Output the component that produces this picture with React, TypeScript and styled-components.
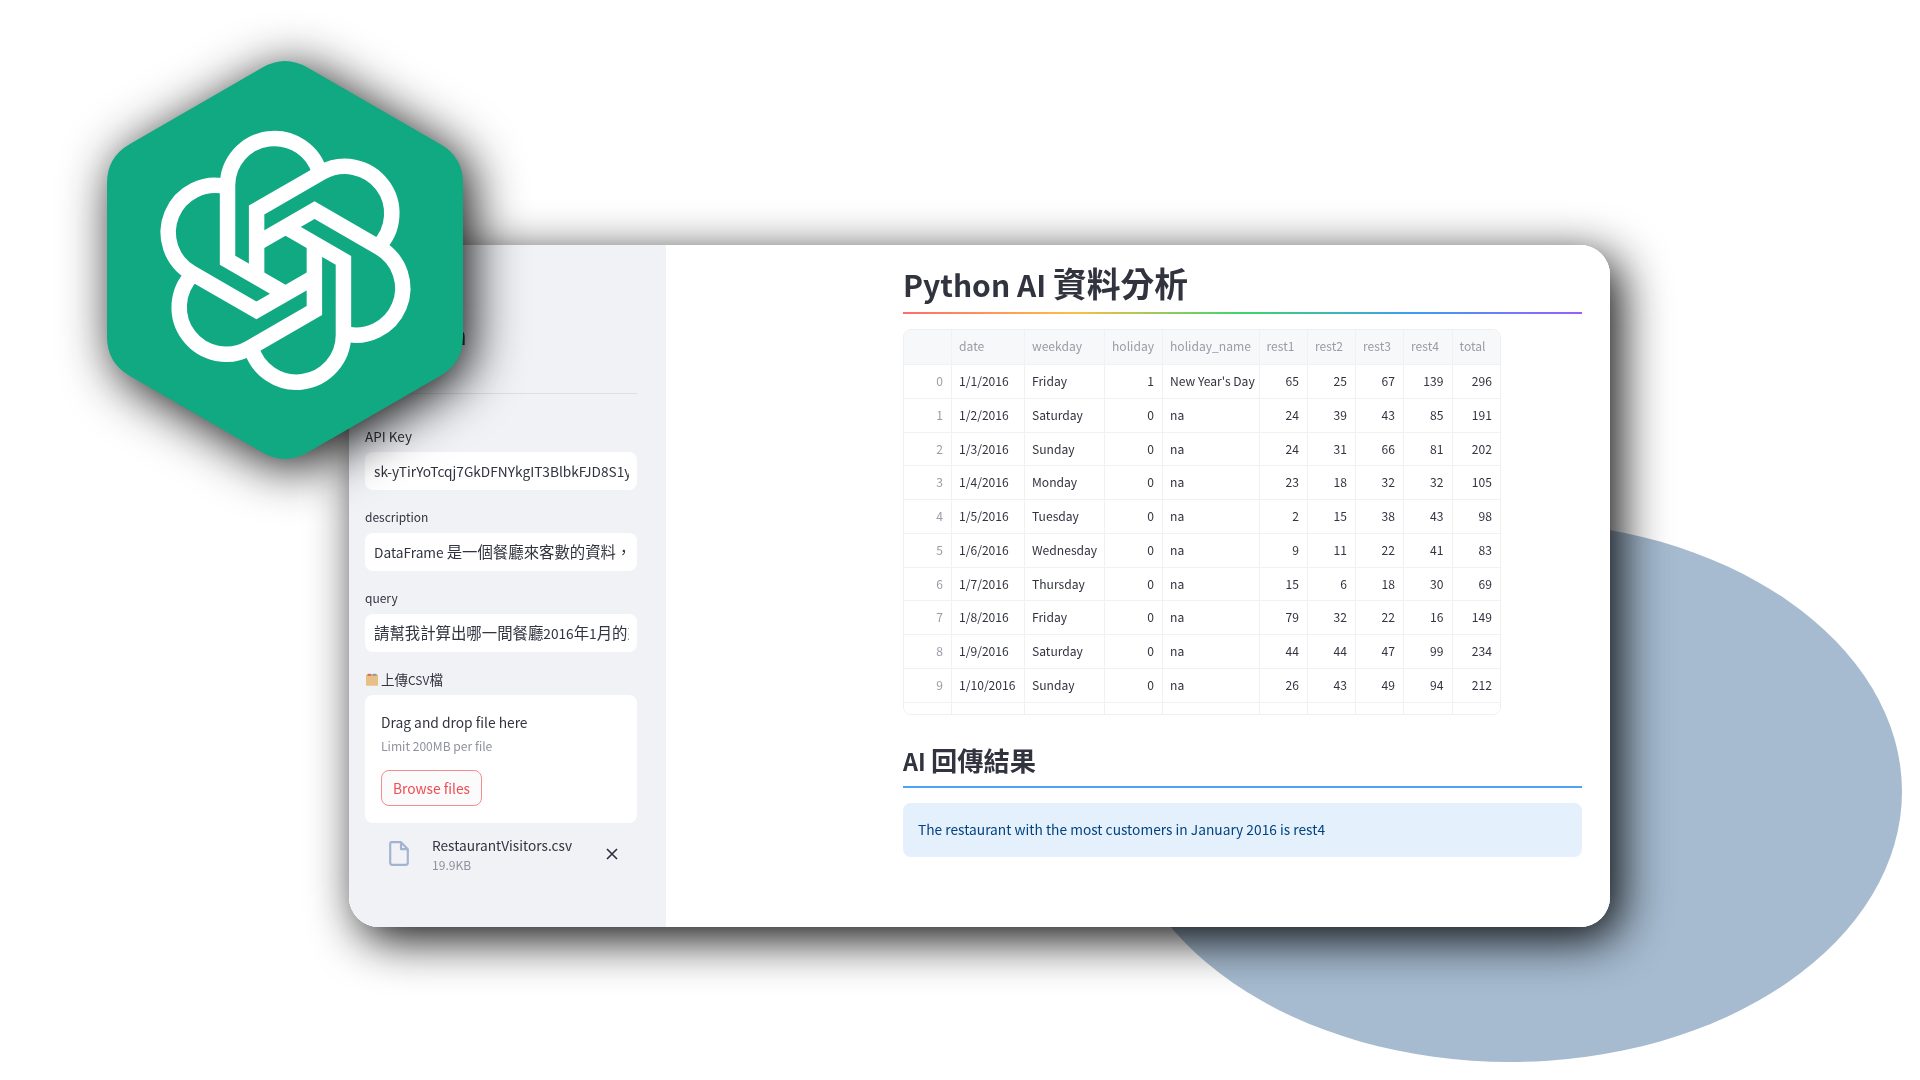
import React from "react";
import styled, { createGlobalStyle } from "styled-components";

const FONT = `"Noto Sans CJK TC", "Noto Sans", sans-serif`;

const Global = createGlobalStyle`
  html, body { margin: 0; padding: 0; background: #fff; }
  body { font-family: ${FONT}; color: #31333f; }
`;

const Stage = styled.div`
  position: relative;
  width: 1920px;
  height: 1080px;
  padding: 245px 310px 153px 349px;
  box-sizing: border-box;
  overflow: hidden;
  background: #fff;
`;

const Blob = styled.div`
  position: absolute;
  left: 1118px;
  top: 521px;
  width: 784px;
  height: 541px;
  border-radius: 50%;
  background: #a6bbd0;
`;

const Logo = styled.svg`
  position: absolute;
  left: 90px;
  top: 40px;
  width: 400px;
  height: 440px;
  overflow: visible;
  filter: drop-shadow(8px 8px 26px rgba(0, 0, 0, 0.95));
`;

const WindowShadow = styled.div`
  position: relative;
  height: 100%;
  border-radius: 30px;
  box-shadow: 10px 12px 48px rgba(0, 0, 0, 0.95);
`;

const Window = styled.div`
  display: flex;
  height: 100%;
  border-radius: 30px;
  overflow: hidden;
  background: #fff;
  filter: blur(0.35px);
`;

const Lat = styled.span`
  font-size: 0.89em;
`;

const Sidebar = styled.aside`
  width: 317px;
  flex: none;
  box-sizing: border-box;
  padding: 0 29px 0 16px;
  background: #f0f2f6;
`;

const SideHead = styled.div`
  height: 149px;
  padding-top: 70px;
  border-bottom: 1px solid #dcdee4;
  box-sizing: border-box;
  margin-bottom: 32px;
`;

const SideTitle = styled.div`
  width: 101.5px;
  height: 40px;
  font-size: 24px;
  line-height: 40px;
  font-weight: 700;
  text-align: right;
  white-space: nowrap;
  overflow: hidden;
`;

const Field = styled.div`
  display: flex;
  flex-direction: column;
  gap: 6px;
  margin-bottom: 17px;
`;

const FieldLabel = styled.label`
  display: flex;
  align-items: center;
  gap: 2px;
  height: 20px;
  font-size: 13.5px;
  line-height: 18px;
  color: #31333f;
`;

const InputBox = styled.div`
  height: 38px;
  box-sizing: border-box;
  padding: 0 8px 0 9px;
  border-radius: 8px;
  background: #fff;
  font-size: 15.4px;
  line-height: 36px;
  color: #31333f;
`;

const InputText = styled.div`
  white-space: nowrap;
  overflow: hidden;
`;

const Dropzone = styled.div`
  height: 128px;
  box-sizing: border-box;
  padding: 16px 16px 0;
  border-radius: 8px;
  background: #fff;
`;

const DropTitle = styled.div`
  font-size: 13.8px;
  line-height: 22px;
`;

const DropHint = styled.div`
  margin-top: 4px;
  font-size: 12.1px;
  line-height: 18px;
  color: #8f929e;
`;

const Browse = styled.button`
  display: block;
  margin-top: 15px;
  width: 101px;
  height: 36px;
  padding: 0;
  border: 1px solid #f08e92;
  border-radius: 8px;
  background: #fbfbfb;
  font-family: ${FONT};
  font-size: 13.8px;
  color: #ef4c54;
`;

const FileRow = styled.div`
  display: flex;
  align-items: flex-start;
  padding: 5px 0 0 24px;
`;

const FileIcon = styled.svg`
  width: 20px;
  height: 25px;
  margin-top: 7px;
  flex: none;
`;

const FileInfo = styled.div`
  width: 173px;
  margin-left: 23px;
`;

const FileName = styled.div`
  font-size: 13.7px;
  line-height: 22px;
`;

const FileSize = styled.div`
  font-size: 12.1px;
  line-height: 18px;
  color: #8f929e;
`;

const CloseIcon = styled.svg`
  width: 14px;
  height: 14px;
  margin-top: 13px;
  flex: none;
`;

const Main = styled.main`
  flex: 1;
  box-sizing: border-box;
  padding: 10px 28px 0 237px;
  background: #fff;
`;

const Title = styled.h1`
  margin: 0;
  height: 57px;
  font-size: 33.75px;
  line-height: 55px;
  font-weight: 700;
  color: #31333f;
`;

const Rule = styled.div<{ $rainbow?: boolean }>`
  height: 2px;
  background: ${(p) =>
    p.$rainbow
      ? "linear-gradient(to right, #ff6c6c, #ffbd45, #3dd56d, #3d9df3, #9a5dff)"
      : "#4fa3f3"};
`;

const TableWrap = styled.div`
  margin-top: 15px;
  width: 598px;
  height: 386px;
  box-sizing: border-box;
  overflow: hidden;
  border: 1px solid #eeeff1;
  border-radius: 8px;
`;

const COLS = "48px 73px 80px 58px 96.5px 48.5px 48px 48px 48.5px 48.5px";

const Row = styled.div<{ $head?: boolean }>`
  display: grid;
  grid-template-columns: ${COLS};
  height: ${(p) => (p.$head ? "35px" : "33.75px")};
  box-sizing: border-box;
  border-bottom: 1.5px solid #f0f1f3;
  background: ${(p) => (p.$head ? "#f7f8f9" : "#fff")};
  line-height: ${(p) => (p.$head ? "32px" : "31px")};
`;

const Cell = styled.div<{ $right?: boolean; $muted?: boolean }>`
  box-sizing: border-box;
  padding: 0 ${(p) => (p.$right ? "8px" : "2px")} 0 7px;
  border-right: 1.5px solid #f0f1f3;
  font-size: 12.1px;
  white-space: nowrap;
  overflow: hidden;
  text-align: ${(p) => (p.$right ? "right" : "left")};
  color: ${(p) => (p.$muted ? "#9a9ca6" : "#31333f")};
`;

const Heading = styled.h2`
  margin: 22px 0 0;
  height: 49px;
  font-size: 26.25px;
  line-height: 47px;
  font-weight: 700;
  color: #31333f;
`;

const Info = styled.div`
  margin-top: 15px;
  height: 54px;
  box-sizing: border-box;
  padding: 0 15px;
  border-radius: 8px;
  background: #e4f0fb;
  font-size: 13.75px;
  line-height: 52px;
  color: #004280;
`;

const headers = ["", "date", "weekday", "holiday", "holiday_name", "rest1", "rest2", "rest3", "rest4", "total"];

const rows: [string, string, number, string, number, number, number, number, number][] = [
  ["1/1/2016", "Friday", 1, "New Year's Day", 65, 25, 67, 139, 296],
  ["1/2/2016", "Saturday", 0, "na", 24, 39, 43, 85, 191],
  ["1/3/2016", "Sunday", 0, "na", 24, 31, 66, 81, 202],
  ["1/4/2016", "Monday", 0, "na", 23, 18, 32, 32, 105],
  ["1/5/2016", "Tuesday", 0, "na", 2, 15, 38, 43, 98],
  ["1/6/2016", "Wednesday", 0, "na", 9, 11, 22, 41, 83],
  ["1/7/2016", "Thursday", 0, "na", 15, 6, 18, 30, 69],
  ["1/8/2016", "Friday", 0, "na", 79, 32, 22, 16, 149],
  ["1/9/2016", "Saturday", 0, "na", 44, 44, 47, 99, 234],
  ["1/10/2016", "Sunday", 0, "na", 26, 43, 49, 94, 212],
  ["1/11/2016", "Monday", 0, "na", 21, 28, 30, 54, 133],
];

const HEX =
  "M172.5 27.5Q195 14.5 217.5 27.5L350.5 104.25Q373 117.25 373 143.25L373 296.75Q373 322.75 350.5 335.75L217.5 412.5Q195 425.5 172.5 412.5L39.5 335.75Q17 322.75 17 296.75L17 143.25Q17 117.25 39.5 104.25Z";

// One ribbon of the knot: inner leg, corner, diagonal, big lobe. The mark is six of these turned by 60 degrees.
const RIBBON = "M-29.33 17L-29.33 -51L36.5 -89A47.67 47.67 0 0 1 94 -14";

export default function App() {
  return (
    <Stage>
      <Global />
      <Blob />
      <WindowShadow>
        <Window>
          <Sidebar>
            <SideHead>
              <SideTitle>Open</SideTitle>
            </SideHead>
            <Field>
              <FieldLabel>API Key</FieldLabel>
              <InputBox>
                <InputText>
                  <Lat>sk-yTirYoTcqj7GkDFNYkgIT3BlbkFJD8S1yLmnopQrStUv</Lat>
                </InputText>
              </InputBox>
            </Field>
            <Field>
              <FieldLabel>
                <Lat>description</Lat>
              </FieldLabel>
              <InputBox>
                <InputText>
                  <Lat>DataFrame </Lat>是一個餐廳來客數的資料，包含日期
                </InputText>
              </InputBox>
            </Field>
            <Field>
              <FieldLabel>
                <Lat>query</Lat>
              </FieldLabel>
              <InputBox>
                <InputText>
                  請幫我計算出哪一間餐廳<Lat>2016</Lat>年<Lat>1</Lat>月的來客數最多
                </InputText>
              </InputBox>
            </Field>
            <Field>
              <FieldLabel>
                <svg width="14" height="13" viewBox="0 0 14 13">
                  <path d="M1 2.5h12v9.5a.7.7 0 0 1-.7.7H1.7a.7.7 0 0 1-.7-.7z" fill="#e6c084" />
                  <path d="M2 1h10l1 2H1z" fill="#d9ad70" />
                  <rect x="3" y="0.8" width="3" height="2" fill="#d8696a" />
                  <rect x="8" y="0.8" width="3" height="2" fill="#7f9fcf" />
                </svg>
                <span>
                  上傳<Lat>CSV</Lat>檔
                </span>
              </FieldLabel>
              <Dropzone>
                <DropTitle>Drag and drop file here</DropTitle>
                <DropHint>Limit 200MB per file</DropHint>
                <Browse>Browse files</Browse>
              </Dropzone>
              <FileRow>
                <FileIcon viewBox="0 0 20 25">
                  <path
                    d="M2.5 1.2h9.5l6.8 7v13.6a2 2 0 0 1-2 2H3.2a2 2 0 0 1-2-2V2.5a1.3 1.3 0 0 1 1.3-1.3zM12 1.2v7h6.8"
                    fill="none"
                    stroke="#a3b4d2"
                    strokeWidth="2.2"
                    strokeLinejoin="round"
                  />
                </FileIcon>
                <FileInfo>
                  <FileName>RestaurantVisitors.csv</FileName>
                  <FileSize>19.9KB</FileSize>
                </FileInfo>
                <CloseIcon viewBox="0 0 14 14">
                  <path d="M2 2l10 10M12 2L2 12" stroke="#31333f" strokeWidth="1.7" fill="none" />
                </CloseIcon>
              </FileRow>
            </Field>
          </Sidebar>
          <Main>
            <Title>
              <Lat>Python AI </Lat>資料分析
            </Title>
            <Rule $rainbow />
            <TableWrap>
              <Row $head>
                {headers.map((h, i) => (
                  <Cell key={i} $muted>
                    {h}
                  </Cell>
                ))}
              </Row>
              {rows.map((r, i) => (
                <Row key={i}>
                  <Cell $right $muted>
                    {i}
                  </Cell>
                  {r.map((v, j) => (
                    <Cell key={j} $right={typeof v === "number"}>
                      {v}
                    </Cell>
                  ))}
                </Row>
              ))}
            </TableWrap>
            <Heading>
              <Lat>AI </Lat>回傳結果
            </Heading>
            <Rule />
            <Info>The restaurant with the most customers in January 2016 is rest4</Info>
          </Main>
        </Window>
      </WindowShadow>
      <Logo viewBox="0 0 400 440">
        <path d={HEX} fill="#10a981" />
        <g transform="translate(195.5 220.3) scale(0.985)" fill="none" stroke="#fff" strokeWidth="15.7" strokeLinejoin="miter">
          {[0, 60, 120, 180, 240, 300].map((a) => (
            <path key={a} d={RIBBON} transform={`rotate(${a})`} />
          ))}
        </g>
      </Logo>
    </Stage>
  );
}
